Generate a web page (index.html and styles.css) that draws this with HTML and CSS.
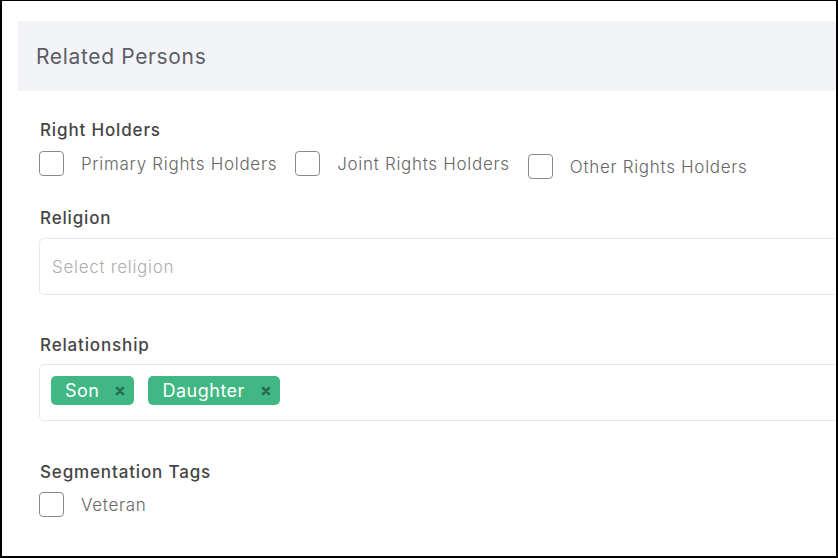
FILE: index.html
```html
<!DOCTYPE html>
<html lang="en">
<head>
<meta charset="utf-8">
<title>Related Persons</title>
<link rel="stylesheet" href="styles.css">
</head>
<body>
<div class="frame">
  <div class="panel">
    <div class="panel-header">Related Persons</div>
    <div class="panel-body">
      <div class="field field-first">
        <div class="label">Right Holders</div>
        <div class="checks">
          <label class="check"><span class="box"></span><span class="check-text">Primary Rights Holders</span></label>
          <label class="check"><span class="box"></span><span class="check-text">Joint Rights Holders</span></label>
          <label class="check check-low"><span class="box"></span><span class="check-text">Other Rights Holders</span></label>
        </div>
      </div>
      <div class="field">
        <div class="label">Religion</div>
        <div class="select"><span class="placeholder">Select religion</span></div>
      </div>
      <div class="field field-rel">
        <div class="label">Relationship</div>
        <div class="select select-tags">
          <span class="tag">Son<svg class="tag-x" viewBox="0 0 10 10"><path d="M2 2L8 8M8 2L2 8"/></svg></span>
          <span class="tag">Daughter<svg class="tag-x" viewBox="0 0 10 10"><path d="M2 2L8 8M8 2L2 8"/></svg></span>
        </div>
      </div>
      <div class="field field-seg">
        <div class="label">Segmentation Tags</div>
        <div class="checks">
          <label class="check"><span class="box"></span><span class="check-text">Veteran</span></label>
        </div>
      </div>
    </div>
  </div>
</div>
</body>
</html>
```

FILE: styles.css
```css
html, body {
  margin: 0;
  padding: 0;
  background: #fff;
}
.frame {
  box-sizing: border-box;
  width: 838px;
  height: 558px;
  border-style: solid;
  border-color: #000;
  border-width: 1px 2px 2px 2px;
  overflow: hidden;
  font-family: "Inter", "Open Sans", sans-serif;
  padding: 20px 0 0 16px;
}
.panel {
  margin-right: -10px;
}
.panel-header {
  height: 70px;
  background: #f3f4f8;
  box-sizing: border-box;
  padding-left: 18px;
  display: flex;
  align-items: center;
  font-size: 21px;
  color: #5c5d66;
  letter-spacing: 0.65px;
}
.panel-body {
  padding: 27px 0 0 21px;
}
.field {
  margin-top: 30px;
}
.field-first {
  margin-top: 0;
}
.field-rel {
  margin-top: 38px;
}
.field-seg {
  margin-top: 39px;
}
.label {
  font-size: 17px;
  line-height: 24px;
  font-weight: 500;
  color: #454545;
  letter-spacing: 0.85px;
  padding-left: 1px;
  margin-bottom: 8px;
}
.field-first .label {
  margin-bottom: 9px;
}
.field-rel .label {
  margin-bottom: 7px;
}
.checks {
  display: flex;
  align-items: flex-start;
  gap: 18px;
  height: 25px;
}
.check {
  display: flex;
  align-items: center;
  gap: 17px;
}
.check-low {
  margin-top: 3px;
}
.box {
  box-sizing: border-box;
  width: 25px;
  height: 25px;
  border: 1.4px solid #8a8a8a;
  border-radius: 4px;
  background: #fff;
}
.check-text {
  font-size: 17px;
  font-weight: 300;
  color: #666;
  letter-spacing: 0.7px;
}
.select {
  box-sizing: border-box;
  height: 57px;
  border: 1px solid #e8e8e8;
  border-radius: 5px;
  background: #fff;
  padding: 0 12px;
  display: flex;
  align-items: center;
}
.placeholder {
  font-size: 17px;
  font-weight: 300;
  color: #adadad;
  letter-spacing: 0.7px;
}
.select-tags {
  align-items: flex-start;
  padding: 11px 0 0 11px;
  gap: 14px;
}
.tag {
  box-sizing: border-box;
  height: 29px;
  background: #41b883;
  color: #fff;
  border-radius: 5px;
  font-size: 18px;
  font-weight: 400;
  letter-spacing: 0.5px;
  display: flex;
  align-items: center;
  padding: 0 9px 0 14px;
}
.tag-x {
  width: 10px;
  height: 10px;
  margin-left: 16px;
  stroke: #266d4d;
  stroke-width: 2.6;
  stroke-linecap: round;
  fill: none;
}
```
